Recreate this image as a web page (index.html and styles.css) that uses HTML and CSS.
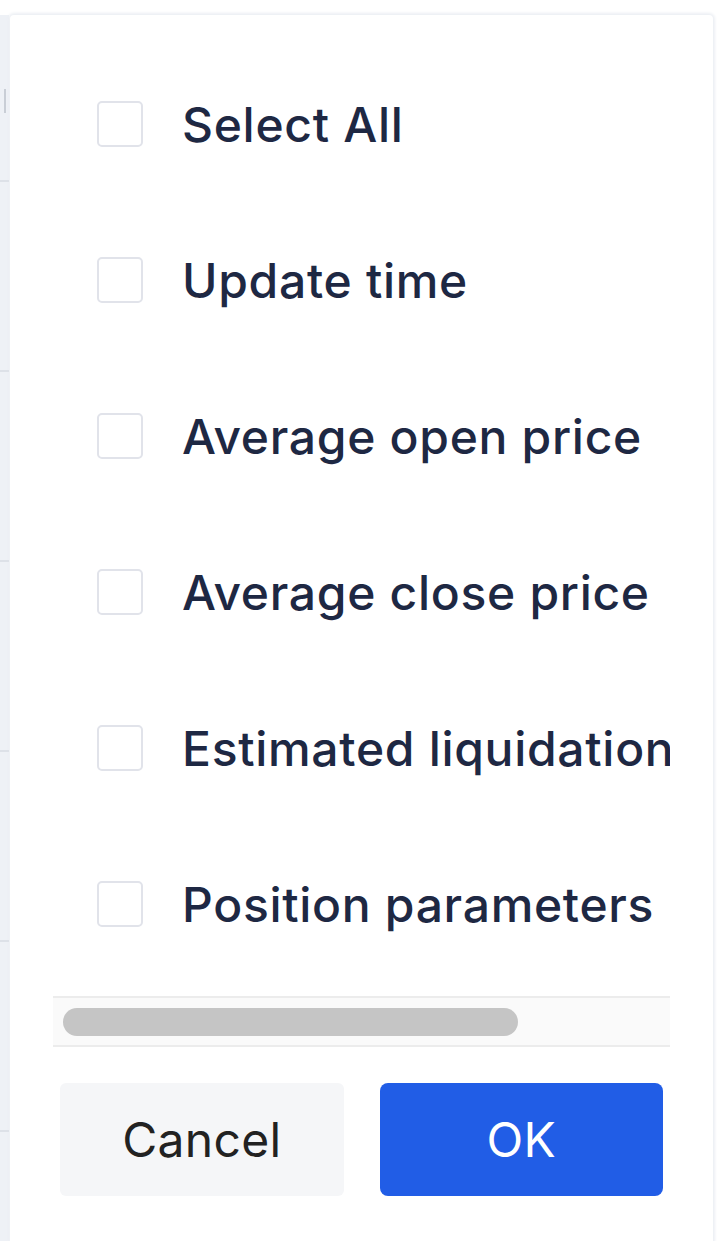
FILE: index.html
```html
<!DOCTYPE html>
<html lang="en">
<head>
<meta charset="utf-8">
<title>Column settings</title>
<link rel="stylesheet" href="styles.css">
</head>
<body>
<div class="page">
  <div class="table-edge">
    <div class="edge-row first"><span class="sort-mark"></span></div>
    <div class="edge-row"></div>
    <div class="edge-row"></div>
    <div class="edge-row"></div>
    <div class="edge-row"></div>
    <div class="edge-row"></div>
  </div>
  <div class="panel">
    <div class="list">
      <label class="row"><span class="box"></span><span class="label">Select All</span></label>
      <label class="row"><span class="box"></span><span class="label">Update time</span></label>
      <label class="row"><span class="box"></span><span class="label">Average open price</span></label>
      <label class="row"><span class="box"></span><span class="label">Average close price</span></label>
      <label class="row"><span class="box"></span><span class="label">Estimated liquidation price</span></label>
      <label class="row"><span class="box"></span><span class="label">Position parameters</span></label>
    </div>
    <div class="scrollbar"><div class="thumb"></div></div>
    <div class="actions">
      <button class="btn cancel">Cancel</button>
      <button class="btn ok">OK</button>
    </div>
  </div>
</div>
</body>
</html>
```

FILE: styles.css
```css
html, body {
  margin: 0;
  padding: 0;
  background: #ffffff;
  height: 100%;
  overflow: hidden;
}

body {
  font-family: Inter, "Liberation Sans", sans-serif;
}

.page {
  display: flex;
  padding-top: 15px;
  height: 1241px;
  box-sizing: border-box;
  overflow: hidden;
}

.table-edge {
  width: 9px;
  flex: none;
  background: #eef1f6;
  display: flex;
  flex-direction: column;
}

.edge-row {
  height: 188px;
  flex: none;
  border-bottom: 2px solid #dde1e8;
  position: relative;
}

.edge-row.first {
  height: 165px;
}

.sort-mark {
  position: absolute;
  left: 4px;
  top: 74px;
  width: 2px;
  height: 24px;
  background: #c9ced6;
}

.panel {
  flex: none;
  width: 703px;
  margin-left: 1px;
  background: #ffffff;
  border-radius: 4px 4px 0 0;
  box-shadow: 0 0 3px 2px #eceff4;
  display: flex;
  flex-direction: column;
  padding: 31px 43px 0 43px;
  box-sizing: border-box;
}

.list {
  overflow: hidden;
  display: flex;
  flex-direction: column;
}

.row {
  display: flex;
  align-items: center;
  height: 156px;
  padding-left: 44px;
  white-space: nowrap;
}

.box {
  flex: none;
  width: 42px;
  height: 42px;
  border: 2px solid #e1e3ea;
  border-radius: 5px;
  background: #fff;
}

.label {
  margin-left: 39px;
  font-size: 48px;
  font-weight: 500;
  color: #1e2843;
  letter-spacing: 0.7px;
}

.scrollbar {
  margin-top: 14px;
  height: 47px;
  background: #fafafa;
  border-top: 2px solid #ececec;
  border-bottom: 2px solid #ececec;
  display: flex;
  align-items: center;
  padding-left: 10px;
}

.thumb {
  width: 455px;
  height: 28px;
  border-radius: 14px;
  background: #c5c5c5;
}

.actions {
  display: flex;
  gap: 36px;
  margin: 36px 7px 0 7px;
}

.btn {
  flex: 1;
  height: 113px;
  border: none;
  font-family: Inter, "Liberation Sans", sans-serif;
  font-size: 48px;
  font-weight: 400;
  letter-spacing: 0.3px;
}

.cancel {
  background: #f5f6f8;
  color: #222222;
  border-radius: 6px;
}

.ok {
  background: #215de6;
  color: #ffffff;
  border-radius: 8px;
}
```
